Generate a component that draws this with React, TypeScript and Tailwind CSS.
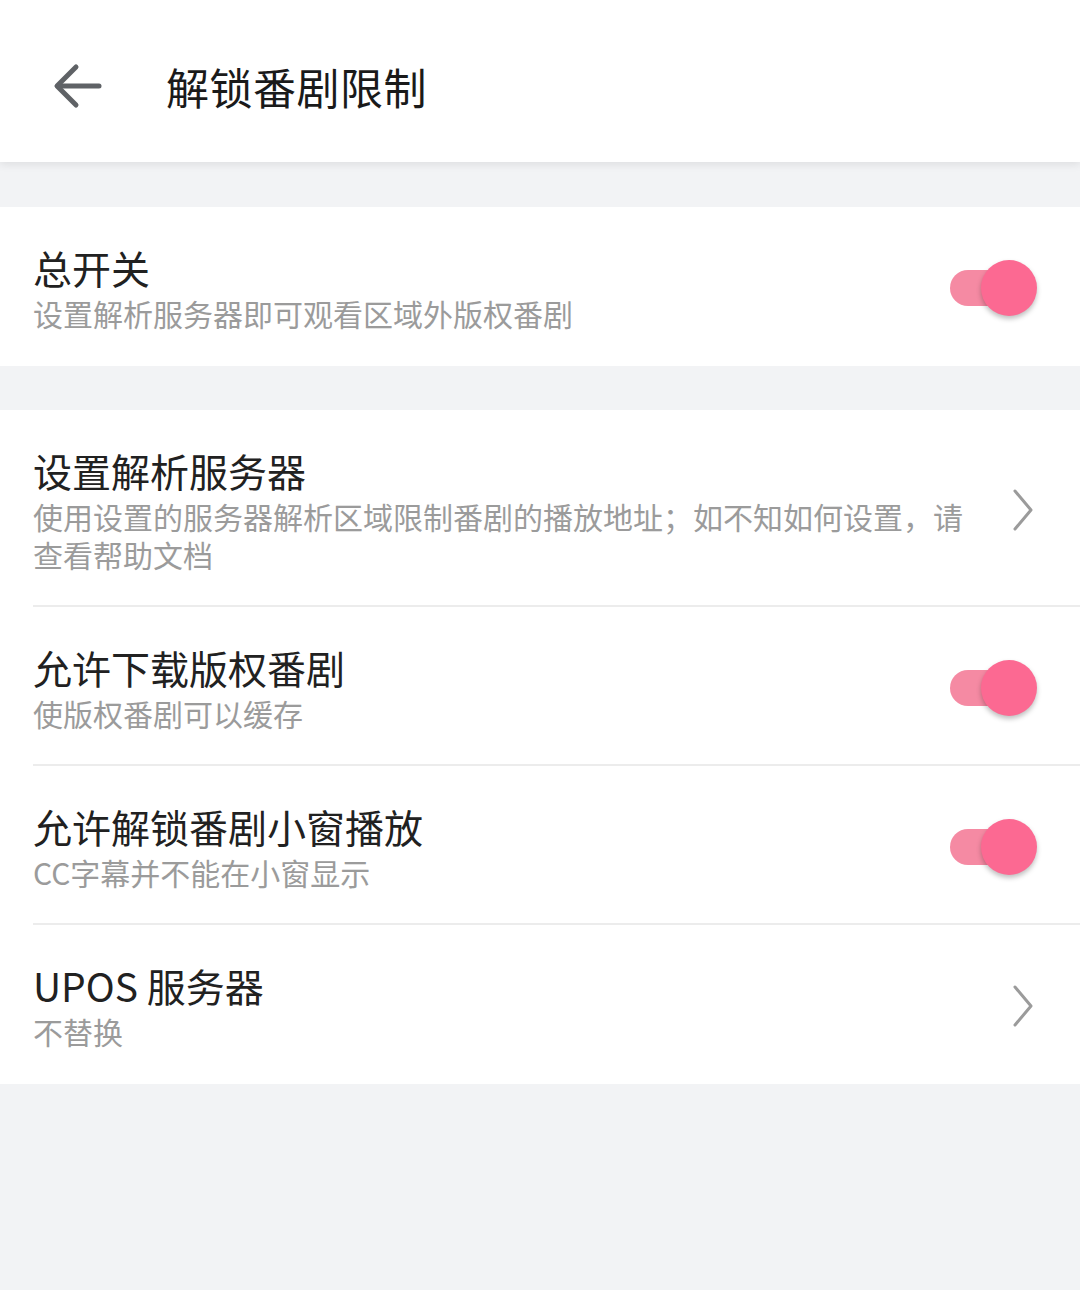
import React from "react";

type Row = {
  title: string;
  desc: string;
  kind: "toggle" | "link";
};

const font = { fontFamily: '"Noto Sans CJK SC", "Noto Sans", sans-serif' };

function Toggle() {
  return (
    <div className="relative h-[60px] w-[90px]">
      <div className="absolute left-[3px] top-[12px] h-[36px] w-[62px] rounded-full bg-[#f58aa3]" />
      <div className="absolute left-[34px] top-[2px] h-[56px] w-[56px] rounded-full bg-[#fc6992] shadow-[0_3px_5px_rgba(0,0,0,0.25)]" />
    </div>
  );
}

function Chevron() {
  return (
    <svg width="24" height="44" viewBox="0 0 24 44" fill="none">
      <path d="M4 3 L20 22 L4 41" stroke="#9b9b9b" strokeWidth="3" strokeLinecap="round" strokeLinejoin="round" />
    </svg>
  );
}

function SettingRow({ row, last }: { row: Row; last?: boolean }) {
  return (
    <div className="pl-[33px]">
      <div className={`flex items-center pt-[36px] ${last ? "pb-[34px]" : "pb-[32px] border-b-2 border-[#ececec]"}`}>
        <div className="w-[940px]">
          <div className="text-[39px] leading-[48px] text-[#212121]">{row.title}</div>
          <div className="mt-[3px] text-[30px] leading-[38px] text-[#9b9b9b]">{row.desc}</div>
        </div>
        <div className="flex flex-1 justify-end pr-[43px]">
          {row.kind === "toggle" ? <Toggle /> : <div className="pr-[2px]"><Chevron /></div>}
        </div>
      </div>
    </div>
  );
}

const rows: Row[] = [
  { title: "设置解析服务器", desc: "使用设置的服务器解析区域限制番剧的播放地址；如不知如何设置，请查看帮助文档", kind: "link" },
  { title: "允许下载版权番剧", desc: "使版权番剧可以缓存", kind: "toggle" },
  { title: "允许解锁番剧小窗播放", desc: "CC字幕并不能在小窗显示", kind: "toggle" },
  { title: "UPOS 服务器", desc: "不替换", kind: "link" },
];

export default function App() {
  return (
    <div className="min-h-[1290px] w-[1080px] bg-[#f2f3f5]" style={font}>
      <header className="relative z-10 flex h-[162px] items-center bg-white pt-[10px] shadow-[0_3px_8px_rgba(0,0,0,0.08)]">
        <div className="ml-[52px] flex h-[50px] w-[52px] items-center">
          <svg width="50" height="46" viewBox="0 0 50 46" fill="none">
            <path d="M47 23 H6" stroke="#5f6266" strokeWidth="5" strokeLinecap="round" />
            <path d="M24 4 L5 23 L24 42" stroke="#5f6266" strokeWidth="5" strokeLinecap="round" strokeLinejoin="round" />
          </svg>
        </div>
        <h1 className="ml-[62px] text-[43px] leading-none tracking-[0.5px] text-[#1a1a1a]">解锁番剧限制</h1>
      </header>

      <div className="h-[45px]" />

      <section className="bg-white">
        <SettingRow row={{ title: "总开关", desc: "设置解析服务器即可观看区域外版权番剧", kind: "toggle" }} last />
      </section>

      <div className="h-[44px]" />

      <section className="bg-white">
        {rows.map((row, i) => (
          <SettingRow key={row.title} row={row} last={i === rows.length - 1} />
        ))}
      </section>
    </div>
  );
}
